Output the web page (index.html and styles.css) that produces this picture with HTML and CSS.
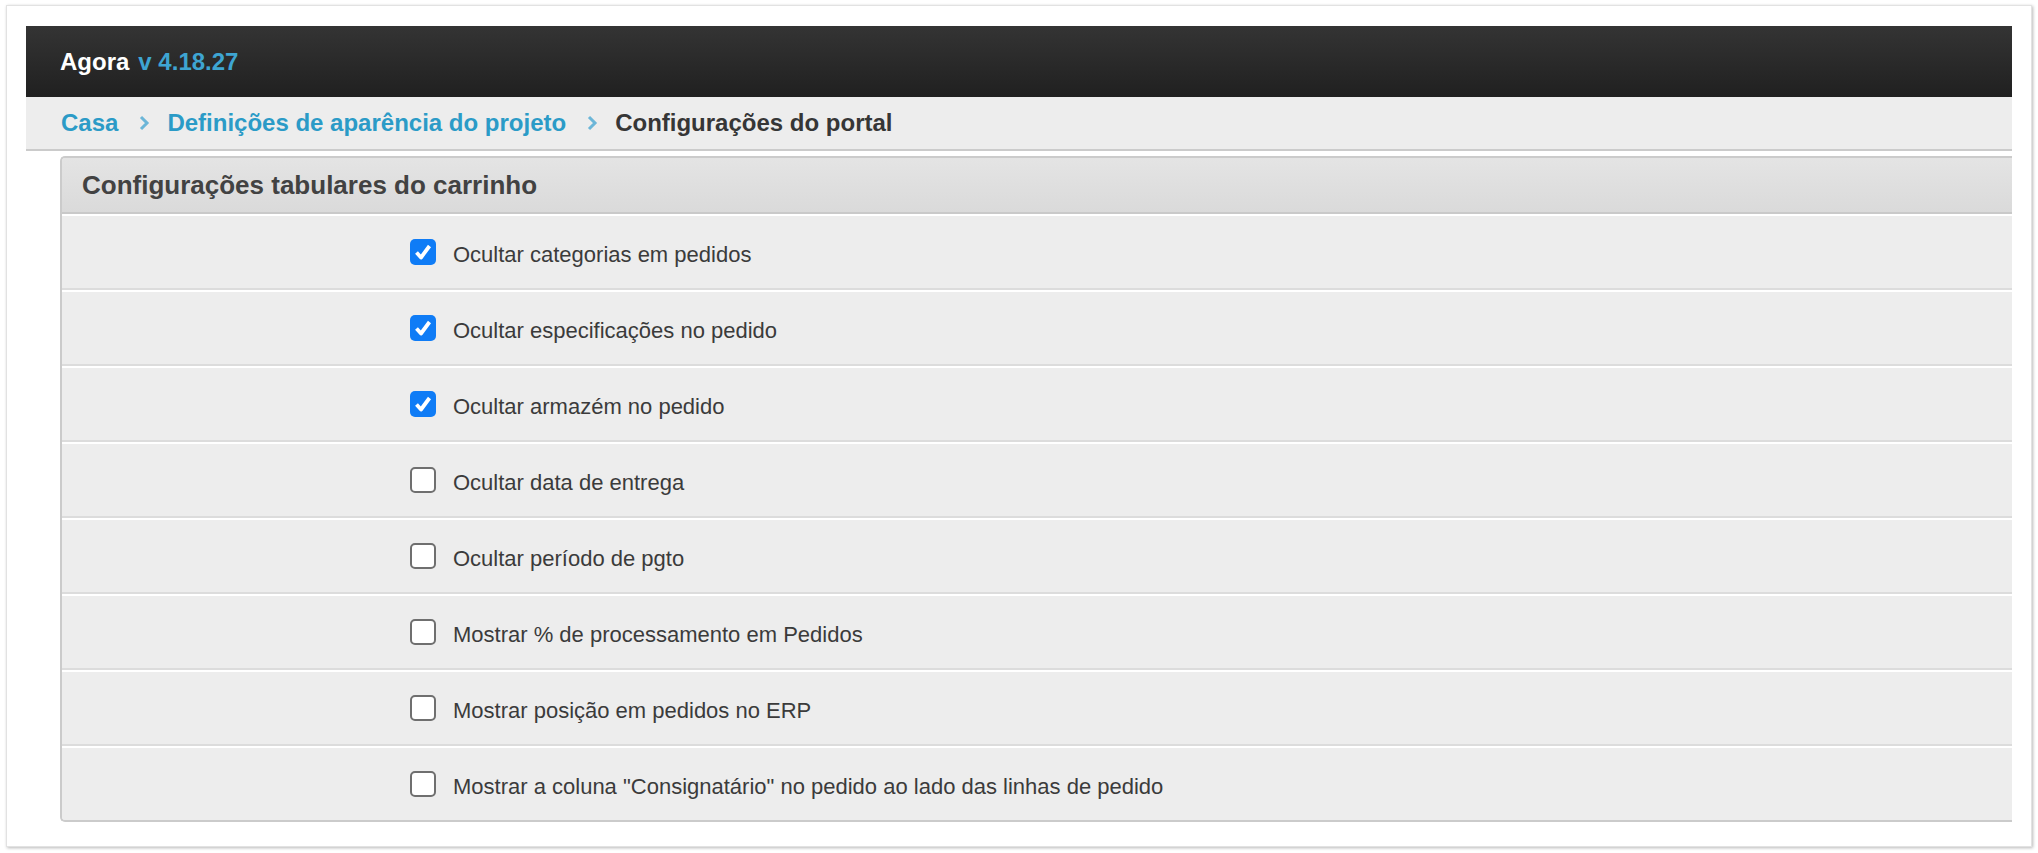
FILE: index.html
```html
<!DOCTYPE html>
<html lang="pt">
<head>
<meta charset="utf-8">
<title>Configurações do portal</title>
<link rel="stylesheet" href="styles.css">
</head>
<body>
<div class="frame">
  <header class="topbar">
    <span class="brand">Agora</span>
    <span class="version">v 4.18.27</span>
  </header>
  <nav class="crumbs">
    <a class="crumb-link" href="#">Casa</a>
    <svg class="chev" viewBox="0 0 12 16" width="12" height="16"><polyline points="3,2 9,8 3,14" fill="none" stroke="#6cb6d8" stroke-width="3"/></svg>
    <a class="crumb-link" href="#">Definições de aparência do projeto</a>
    <svg class="chev" viewBox="0 0 12 16" width="12" height="16"><polyline points="3,2 9,8 3,14" fill="none" stroke="#6cb6d8" stroke-width="3"/></svg>
    <span class="crumb-current">Configurações do portal</span>
  </nav>
  <section class="panel">
    <div class="panel-head">Configurações tabulares do carrinho</div>
    <div class="row">
      <span class="cb checked"><svg viewBox="0 0 26 26" width="26" height="26"><polyline points="6.5,13.5 11,18.5 19.5,7" fill="none" stroke="#fff" stroke-width="3.8" stroke-linejoin="round"/></svg></span>
      <span class="label">Ocultar categorias em pedidos</span>
    </div>
    <div class="row">
      <span class="cb checked"><svg viewBox="0 0 26 26" width="26" height="26"><polyline points="6.5,13.5 11,18.5 19.5,7" fill="none" stroke="#fff" stroke-width="3.8" stroke-linejoin="round"/></svg></span>
      <span class="label">Ocultar especificações no pedido</span>
    </div>
    <div class="row">
      <span class="cb checked"><svg viewBox="0 0 26 26" width="26" height="26"><polyline points="6.5,13.5 11,18.5 19.5,7" fill="none" stroke="#fff" stroke-width="3.8" stroke-linejoin="round"/></svg></span>
      <span class="label">Ocultar armazém no pedido</span>
    </div>
    <div class="row">
      <span class="cb"></span>
      <span class="label">Ocultar data de entrega</span>
    </div>
    <div class="row">
      <span class="cb"></span>
      <span class="label">Ocultar período de pgto</span>
    </div>
    <div class="row">
      <span class="cb"></span>
      <span class="label">Mostrar % de processamento em Pedidos</span>
    </div>
    <div class="row">
      <span class="cb"></span>
      <span class="label">Mostrar posição em pedidos no ERP</span>
    </div>
    <div class="row last">
      <span class="cb"></span>
      <span class="label">Mostrar a coluna "Consignatário" no pedido ao lado das linhas de pedido</span>
    </div>
  </section>
</div>
</body>
</html>
```
FILE: styles.css
```css
* { box-sizing: border-box; }
html, body { margin: 0; padding: 0; background: #fff; }
body { font-family: "Liberation Sans", Arial, Helvetica, sans-serif; }

.frame {
  margin: 5px 6px 6px 6px;
  height: 842px;
  background: #fff;
  border: 1px solid #e2e2e2;
  box-shadow: 1px 1px 3px rgba(0, 0, 0, 0.28);
  padding: 20px 19px 0 19px;
}

.topbar {
  height: 71px;
  background: linear-gradient(#343434, #202020);
  display: flex;
  align-items: center;
  gap: 9px;
  padding-left: 34px;
  font-weight: bold;
  font-size: 24px;
}
.brand { color: #fff; }
.version { color: #3ea5d2; }

.crumbs {
  height: 54px;
  background: #ededed;
  border-bottom: 2px solid #cbcbcb;
  display: flex;
  align-items: center;
  padding-left: 35px;
  font-weight: bold;
  font-size: 24px;
}
.crumb-link { color: #2b9bc7; text-decoration: none; }
.crumb-current { color: #363636; }
.chev { margin: 0 17px 0 20px; }

.panel {
  margin: 5px 0 0 34px;
  border: 2px solid #cbcbcb;
  border-right: none;
  border-radius: 5px 0 0 5px;
  background: #ededed;
  overflow: hidden;
}
.panel-head {
  height: 56px;
  border-bottom: 2px solid #c9c9c9;
  background: linear-gradient(#e4e4e4, #dadada);
  color: #424242;
  font-weight: bold;
  font-size: 26px;
  display: flex;
  align-items: center;
  padding-left: 20px;
}

.row {
  height: 76px;
  border-top: 2px solid #fff;
  border-bottom: 2px solid #dcdcdc;
  display: flex;
  align-items: center;
  padding-left: 348px;
  background: #ededed;
}
.row.last { border-bottom: none; height: 74px; }

.cb {
  width: 26px;
  height: 26px;
  border-radius: 5px;
  border: 2px solid #6f6f6f;
  background: #fff;
  flex: none;
  display: flex;
}
.cb.checked { border: none; background: #0f7cf6; }
.cb svg { display: block; }

.label {
  margin-left: 17px;
  padding-top: 6px;
  color: #3b3b3b;
  font-size: 22px;
}
```
